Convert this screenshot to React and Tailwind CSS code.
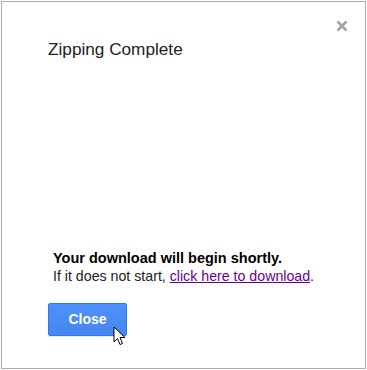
export default function App() {
  return (
    <div className="w-[367px] h-[370px] bg-white p-px" style={{ fontFamily: '"Liberation Sans", Arial, sans-serif' }}>
      <div className="relative w-[365px] h-[368px] border border-[#acacac] bg-white">
        <button className="absolute left-[332px] top-[16px] w-[16px] h-[16px] flex items-center justify-center">
          <svg width="12" height="12" viewBox="0 0 12 12">
            <path d="M1.5 1.5 L10.5 10.5 M10.5 1.5 L1.5 10.5" stroke="#a3a3a3" strokeWidth="2.6" />
          </svg>
        </button>
        <div className="pl-[46px] pt-[37px] text-[17.2px] leading-[20px] text-[#222]">Zipping Complete</div>
        <div className="pl-[51px] pt-[190px] text-[14.2px] leading-[18px] text-[#222]">
          <div className="font-bold text-black text-[14.5px]">Your download will begin shortly.</div>
          <div>
            If it does not start, <a className="text-[#660099] underline">click here to download</a>.
          </div>
        </div>
        <div className="pl-[46px] pt-[18px]">
          <button className="relative w-[79px] h-[33px] rounded-[2px] border border-[#3079ed] bg-gradient-to-b from-[#4d90fe] to-[#4787ed] text-white text-[14px] font-bold shadow-[0_1px_1px_rgba(0,0,0,0.1)]">
            Close
            <svg className="absolute left-[64px] top-[22px]" width="13" height="20" viewBox="0 0 13 20">
              <path d="M1 1 L1 16 L4.5 12.5 L7 18.5 L9.5 17.5 L7 11.5 L12 11.5 Z" fill="#fff" stroke="#000" strokeWidth="1" strokeLinejoin="round" />
            </svg>
          </button>
        </div>
      </div>
    </div>
  );
}
